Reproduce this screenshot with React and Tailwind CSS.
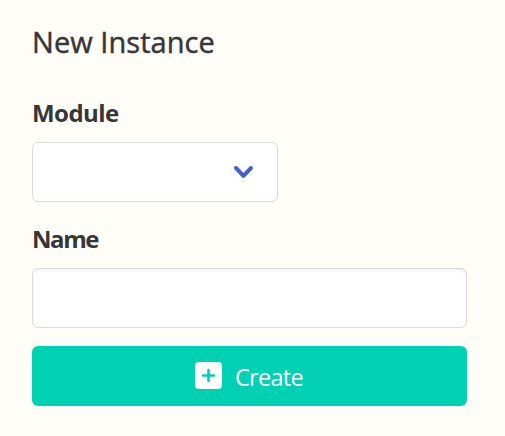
export default function App() {
  return (
    <main className="flex h-[436px] w-[505px] flex-col bg-[#fffdf8] pl-8 pr-[38px] pt-[23px] font-['Open_Sans','Noto_Sans',sans-serif] text-[#363636]">
      <h1 className="h-[38px] whitespace-nowrap text-[29px] leading-[38px] tracking-[0.05px] [-webkit-text-stroke:0.45px_#363636]">New Instance</h1>
      <form className="mt-[34px] flex flex-col" onSubmit={(e) => e.preventDefault()}>
        <label className="mb-[11px] h-9 text-2xl font-bold leading-9">
          <span className="tracking-[-0.55px]">Module</span>
        </label>
        <div className="flex h-[60px] w-[246px] items-center justify-end rounded-md border border-[#dbdbdb] bg-white pr-[22px]">
          <svg width="23" height="19" viewBox="0 0 23 19" fill="none" stroke="#485fc7" strokeWidth="4" strokeLinecap="round" strokeLinejoin="round">
            <path d="M4 5 11.5 12.8 19 5" />
          </svg>
        </div>
        <label htmlFor="name" className="mb-[11px] mt-[19px] h-9 text-2xl font-bold leading-9">
          <span className="tracking-[-1.4px]">Name</span>
        </label>
        <input id="name" className="h-[60px] w-full rounded-md border border-[#dbdbdb] bg-white px-4 shadow-[inset_0_2px_3px_rgba(10,10,10,0.05)] outline-none" />
        <button className="mt-[18px] flex h-[60px] w-full items-center rounded-md bg-[#00d1b2] pl-[163px] text-2xl text-white">
          <svg width="27" height="27" viewBox="0 0 27 27" className="mb-px mr-[13px]">
            <rect width="27" height="27" rx="4" fill="white" />
            <path d="M13.5 8v11M8 13.5h11" stroke="#00d1b2" strokeWidth="2.6" strokeLinecap="round" />
          </svg>
          <span className="pt-1 text-[23.5px] tracking-[-0.7px]">Create</span>
        </button>
      </form>
    </main>
  );
}
